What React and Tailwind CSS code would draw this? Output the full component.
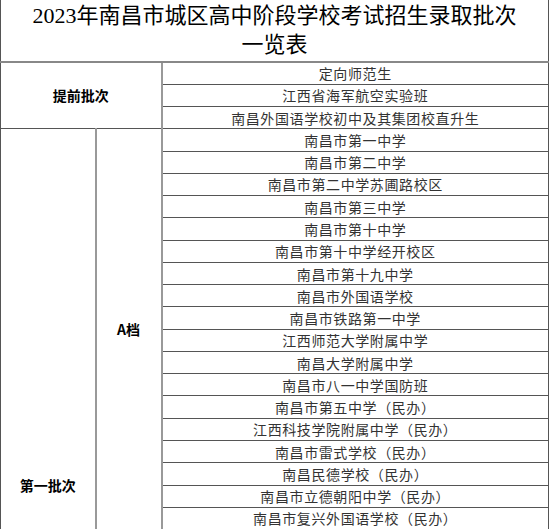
import React from "react";

const early = ["定向师范生", "江西省海军航空实验班", "南昌外国语学校初中及其集团校直升生"];

const gradeA = [
  "南昌市第一中学",
  "南昌市第二中学",
  "南昌市第二中学苏圃路校区",
  "南昌市第三中学",
  "南昌市第十中学",
  "南昌市第十中学经开校区",
  "南昌市第十九中学",
  "南昌市外国语学校",
  "南昌市铁路第一中学",
  "江西师范大学附属中学",
  "南昌大学附属中学",
  "南昌市八一中学国防班",
  "南昌市第五中学（民办）",
  "江西科技学院附属中学（民办）",
  "南昌市雷式学校（民办）",
  "南昌民德学校（民办）",
  "南昌市立德朝阳中学（民办）",
  "南昌市复兴外国语学校（民办）",
];

const gradeB = [
  "南昌市第二十六中学",
  "南昌市第二十八中学",
  "南昌市第十七中学",
  "南昌市第九中学",
  "南昌市第十二中学",
  "南昌市第十五中学",
  "南昌市第二十三中学",
  "南昌市洪都中学",
  "南昌市八一中学",
  "南昌县莲塘第一中学",
  "新建区第一中学",
  "江西师范大学附属外国语学校",
  "南昌市豫章中学",
  "南昌市湾里第一中学",
];

const cell = "border border-[#555] p-0 text-center";
const rowH = "h-[22.27px]";
const label = `${cell} border-r-2 border-r-[#999] font-bold text-black tracking-normal`;
const school = `${cell} leading-none tracking-[0.6px]`;

export default function App() {
  return (
    <div className="w-[550px] bg-white font-['Noto_Sans_CJK_SC',sans-serif] text-[14px] text-[#333]">
      <table className="w-[549px] table-fixed border-collapse">
        <colgroup>
          <col className="w-[95px]" />
          <col className="w-[66px]" />
          <col />
        </colgroup>
        <tbody>
          <tr>
            <td
              colSpan={3}
              className="h-[62px] border-x border-x-[#555] border-b-2 border-b-[#888] p-0 pb-[2px] text-center font-['Liberation_Serif','Noto_Sans_CJK_SC',serif] text-[22px] leading-[29px] text-black"
            >
              2023年南昌市城区高中阶段学校考试招生录取批次
              <br />
              一览表
            </td>
          </tr>
          {early.map((name, i) => (
            <tr key={name} className={rowH}>
              {i === 0 && (
                <td rowSpan={early.length} colSpan={2} className={label}>
                  提前批次
                </td>
              )}
              <td className={school}>{name}</td>
            </tr>
          ))}
          {[...gradeA, ...gradeB].map((name, i) => (
            <tr key={name} className={rowH}>
              {i === 0 && (
                <td rowSpan={gradeA.length + gradeB.length} className={label}>
                  第一批次
                </td>
              )}
              {i === 0 && (
                <td rowSpan={gradeA.length} className={label}>
                  A档
                </td>
              )}
              {i === gradeA.length && (
                <td rowSpan={gradeB.length} className={label}>
                  B档
                </td>
              )}
              <td className={school}>{name}</td>
            </tr>
          ))}
        </tbody>
      </table>
    </div>
  );
}
